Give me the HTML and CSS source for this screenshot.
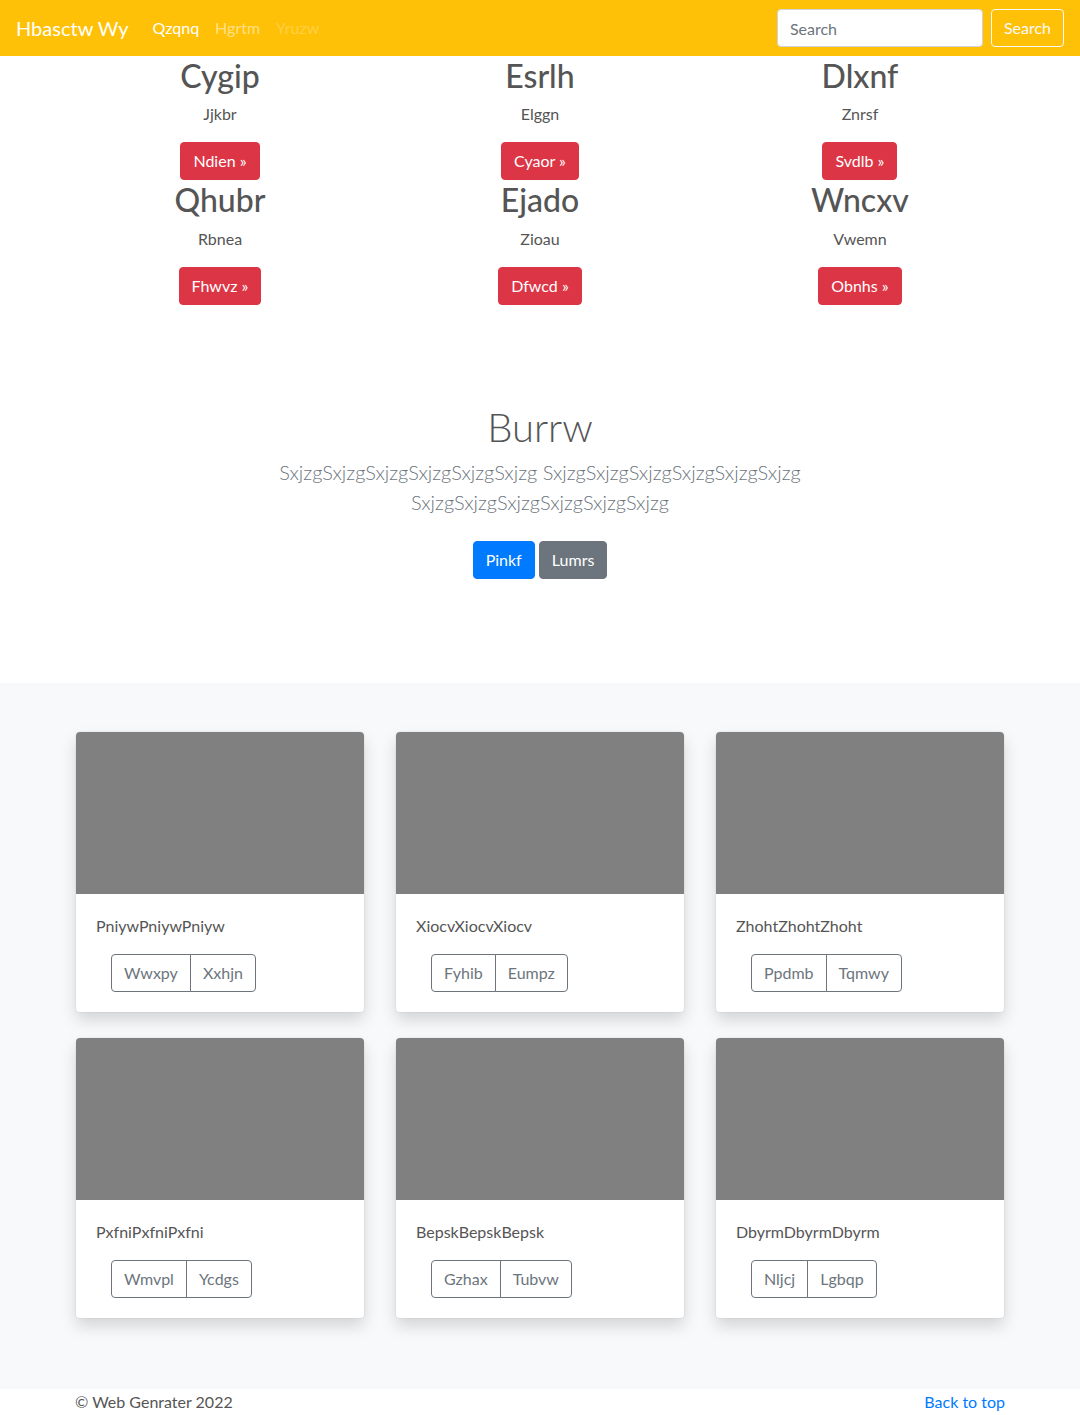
FILE: index.html
```html
<!DOCTYPE html>
<html lang="en">
<head>
<meta charset="utf-8">
<title>Hbasctw Wy</title>
<link rel="stylesheet" href="styles.css">
</head>
<body>
<header class="navbar">
  <div class="nav-left">
    <a class="brand" href="#">Hbasctw Wy</a>
    <nav class="nav-links">
      <a class="nav-link active" href="#">Qzqnq</a>
      <a class="nav-link" href="#">Hgrtm</a>
      <a class="nav-link disabled" href="#">Yruzw</a>
    </nav>
  </div>
  <form class="search-form">
    <input class="search-input" type="text" placeholder="Search">
    <button class="btn btn-outline-light" type="button">Search</button>
  </form>
</header>

<main>
  <div class="container">
    <div class="row">
      <div class="col feature"><h2>Cygip</h2><p>Jjkbr</p><a class="btn btn-danger" href="#">Ndien »</a></div>
      <div class="col feature"><h2>Esrlh</h2><p>Elggn</p><a class="btn btn-danger" href="#">Cyaor »</a></div>
      <div class="col feature"><h2>Dlxnf</h2><p>Znrsf</p><a class="btn btn-danger" href="#">Svdlb »</a></div>
    </div>
    <div class="row">
      <div class="col feature"><h2>Qhubr</h2><p>Rbnea</p><a class="btn btn-danger" href="#">Fhwvz »</a></div>
      <div class="col feature"><h2>Ejado</h2><p>Zioau</p><a class="btn btn-danger" href="#">Dfwcd »</a></div>
      <div class="col feature"><h2>Wncxv</h2><p>Vwemn</p><a class="btn btn-danger" href="#">Obnhs »</a></div>
    </div>
  </div>

  <section class="hero">
    <div class="hero-inner">
      <h1>Burrw</h1>
      <p class="lead">SxjzgSxjzgSxjzgSxjzgSxjzgSxjzg SxjzgSxjzgSxjzgSxjzgSxjzgSxjzg SxjzgSxjzgSxjzgSxjzgSxjzgSxjzg</p>
      <p class="hero-actions">
        <a class="btn btn-primary" href="#">Pinkf</a>
        <a class="btn btn-secondary" href="#">Lumrs</a>
      </p>
    </div>
  </section>

  <section class="album">
    <div class="container">
      <div class="card-grid">
        <div class="card"><div class="card-img"></div><div class="card-body"><p class="card-text">PniywPniywPniyw</p><div class="btn-group"><button class="btn btn-outline-secondary">Wwxpy</button><button class="btn btn-outline-secondary">Xxhjn</button></div></div></div>
        <div class="card"><div class="card-img"></div><div class="card-body"><p class="card-text">XiocvXiocvXiocv</p><div class="btn-group"><button class="btn btn-outline-secondary">Fyhib</button><button class="btn btn-outline-secondary">Eumpz</button></div></div></div>
        <div class="card"><div class="card-img"></div><div class="card-body"><p class="card-text">ZhohtZhohtZhoht</p><div class="btn-group"><button class="btn btn-outline-secondary">Ppdmb</button><button class="btn btn-outline-secondary">Tqmwy</button></div></div></div>
        <div class="card"><div class="card-img"></div><div class="card-body"><p class="card-text">PxfniPxfniPxfni</p><div class="btn-group"><button class="btn btn-outline-secondary">Wmvpl</button><button class="btn btn-outline-secondary">Ycdgs</button></div></div></div>
        <div class="card"><div class="card-img"></div><div class="card-body"><p class="card-text">BepskBepskBepsk</p><div class="btn-group"><button class="btn btn-outline-secondary">Gzhax</button><button class="btn btn-outline-secondary">Tubvw</button></div></div></div>
        <div class="card"><div class="card-img"></div><div class="card-body"><p class="card-text">DbyrmDbyrmDbyrm</p><div class="btn-group"><button class="btn btn-outline-secondary">Nljcj</button><button class="btn btn-outline-secondary">Lgbqp</button></div></div></div>
      </div>
    </div>
  </section>
</main>

<footer class="footer">
  <div class="container footer-inner">
    <p class="copy">© Web Genrater 2022</p>
    <a class="top-link" href="#">Back to top</a>
  </div>
</footer>
</body>
</html>
```

FILE: styles.css
```css
* { box-sizing: border-box; }

html, body {
  margin: 0;
  padding: 0;
}

body {
  font-family: "Lato", "Open Sans", "Liberation Sans", sans-serif;
  font-size: 16px;
  line-height: 1.5;
  color: #555;
  background: #fff;
}

a { text-decoration: none; }

/* Navbar */
.navbar {
  height: 56px;
  background: #ffc107;
  display: flex;
  align-items: center;
  justify-content: space-between;
  padding: 8px 16px;
}

.nav-left {
  display: flex;
  align-items: center;
}

.brand {
  color: #fff;
  font-size: 20px;
  line-height: 30px;
  margin-right: 16px;
}

.nav-links {
  display: flex;
}

.nav-link {
  color: rgba(255, 255, 255, 0.5);
  padding: 8px;
  font-size: 16px;
}

.nav-link.active { color: #fff; }
.nav-link.disabled { color: rgba(255, 255, 255, 0.25); }

.search-form {
  display: flex;
  align-items: center;
}

.search-input {
  width: 206px;
  height: 38px;
  padding: 6px 12px;
  font-family: inherit;
  font-size: 16px;
  color: #495057;
  background: #fff;
  border: 1px solid #ced4da;
  border-radius: 4px;
  margin-right: 8px;
}

.search-input::placeholder { color: #6c757d; }

/* Buttons */
.btn {
  display: inline-block;
  font-family: inherit;
  font-size: 16px;
  line-height: 24px;
  padding: 6px 12px;
  border: 1px solid transparent;
  border-radius: 4px;
  background: transparent;
  cursor: pointer;
  vertical-align: middle;
}

.btn-outline-light {
  color: #f8f9fa;
  border-color: #f8f9fa;
}

.btn-danger {
  color: #fff;
  background: #dc3545;
  border-color: #dc3545;
}

.btn-primary {
  color: #fff;
  background: #007bff;
  border-color: #007bff;
}

.btn-secondary {
  color: #fff;
  background: #6c757d;
  border-color: #6c757d;
}

.btn-outline-secondary {
  color: #6c757d;
  border-color: #6c757d;
}

/* Layout */
.container {
  width: 960px;
  margin: 0 auto;
  padding: 0 15px;
}

.row {
  display: flex;
  margin: 0 -15px;
}

.col {
  flex: 0 0 33.3333%;
  padding: 0 15px;
}

.feature {
  text-align: center;
}

.feature h2 {
  margin: 0 0 8px;
  padding-top: 2px;
  font-size: 32px;
  font-weight: 500;
  line-height: 36.4px;
  color: #555;
}

.feature p {
  margin: 0 0 16px;
}

/* Hero */
.hero {
  text-align: center;
  padding: 98px 0 96px;
}

.hero-inner {
  max-width: 640px;
  margin: 0 auto;
  padding: 0 15px;
}

.hero h1 {
  margin: 0 0 6px;
  font-size: 40px;
  font-weight: 300;
  line-height: 1.2;
  color: #555;
}

.lead {
  margin: 0 0 18px;
  font-size: 20px;
  font-weight: 300;
  line-height: 30px;
  color: #6c757d;
}

.hero-actions {
  margin: 0;
}

.hero-actions .btn {
  margin: 6px 0 8px;
}

/* Album */
.album {
  background: #f8f9fa;
  padding: 49px 0 71px;
}

.card-grid {
  display: grid;
  grid-template-columns: repeat(3, 1fr);
  column-gap: 30px;
  row-gap: 26px;
}

.card {
  margin: 0 1px;
  background: #fff;
  border-radius: 4px;
  overflow: hidden;
  box-shadow: 0 0 0 1px rgba(0, 0, 0, 0.03), 0 8px 16px rgba(0, 0, 0, 0.15);
}

.card-img {
  height: 162px;
  background: #808080;
}

.card-body {
  padding: 20px;
}

.card-text {
  margin: 0 0 16px;
}

.btn-group {
  display: inline-flex;
  margin-left: 15px;
}

.btn-group .btn:first-child {
  border-top-right-radius: 0;
  border-bottom-right-radius: 0;
}

.btn-group .btn + .btn {
  margin-left: -1px;
  border-top-left-radius: 0;
  border-bottom-left-radius: 0;
}

/* Footer */
.footer {
  background: #fff;
  padding-top: 1px;
}

.footer-inner {
  display: flex;
  justify-content: space-between;
  align-items: flex-start;
}

.copy {
  margin: 0 0 4px;
  color: #555;
}

.top-link {
  color: #007bff;
}
```
